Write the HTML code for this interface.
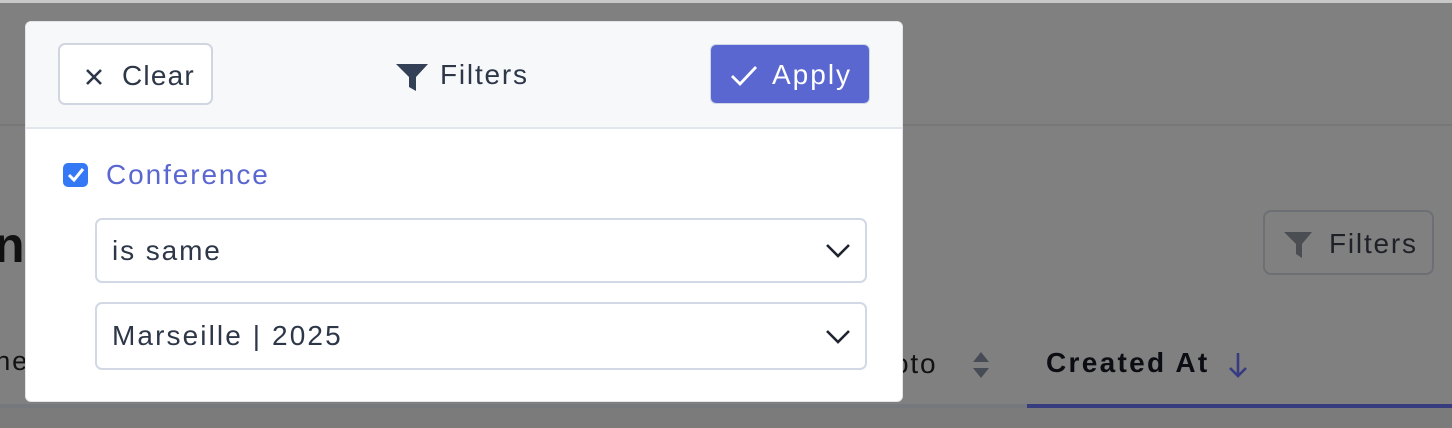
<!DOCTYPE html>
<html><head><style>
*{box-sizing:border-box;margin:0;padding:0}
body{width:1452px;height:428px;overflow:hidden;background:#808080;font-family:"Liberation Sans",sans-serif;position:relative;letter-spacing:1.8px}
.a{position:absolute}
</style></head><body>
<div class="a" style="left:0;top:0;width:1452px;height:3px;background:#c8c8c8"></div>
<div class="a" style="left:0;top:124px;width:1452px;height:2px;background:#777"></div>
<div class="a" style="left:-6px;top:216px;font-size:50px;font-weight:bold;color:#111">n</div>
<div class="a" style="left:-14px;top:346px;font-size:27px;color:#111">the</div>
<div class="a" style="left:1263px;top:210px;width:171px;height:65px;border:2px solid #6c6f73;border-radius:8px"></div>
<svg class="a" style="left:1283px;top:230px" width="32" height="30" viewBox="0 0 32 30"><path d="M1 2h28l-10 12v14l-6-4V14z" fill="#4a4d52"/></svg>
<div class="a" style="left:1329px;top:228px;font-size:28px;color:#1e2127">Filters</div>
<div class="a" style="left:893px;top:348px;font-size:28px;color:#111">oto</div>
<svg class="a" style="left:971px;top:351px" width="20" height="28"><path d="M10 1l8 10H2z M10 27l8-10H2z" fill="#474b55"/></svg>
<div class="a" style="left:1046px;top:347px;font-size:28px;font-weight:bold;color:#0b0d12;letter-spacing:2.3px">Created At</div>
<svg class="a" style="left:1226px;top:350px" width="24" height="30"><path d="M12 3v23M4 18l8 8 8-8" stroke="#363b82" stroke-width="2.6" fill="none"/></svg>
<div class="a" style="left:0;top:404px;width:1027px;height:4px;background:#75787c"></div>
<div class="a" style="left:1027px;top:404px;width:425px;height:4px;background:#373c7e"></div>
<div class="a" style="left:0;top:408px;width:1452px;height:20px;background:#7b7b7b"></div>

<div class="a" style="left:25px;top:21px;width:878px;height:381px;background:#fff;border-radius:6px;overflow:hidden;border:1px solid #e2e6ec">
 <div style="height:107px;background:#f7f8fa;border-bottom:2px solid #e2e6ee;position:relative">
  <div class="a" style="left:32px;top:21px;width:155px;height:62px;border:2px solid #cfd6e2;border-radius:7px;background:#fff"></div>
  <svg class="a" style="left:58px;top:45px" width="20" height="20"><path d="M3 3l14 14M17 3L3 17" stroke="#2d3748" stroke-width="2.6"/></svg>
  <div class="a" style="left:96px;top:38px;font-size:28px;color:#2d3748;letter-spacing:1.2px">Clear</div>
  <svg class="a" style="left:369px;top:41px" width="34" height="30" viewBox="0 0 34 30"><path d="M1 1h32L21 14v14l-7-4V14z" fill="#344055"/></svg>
  <div class="a" style="left:414px;top:37px;font-size:28px;color:#2d3748">Filters</div>
  <div class="a" style="left:684px;top:22px;width:160px;height:60px;background:#5a67d1;border-radius:6px;border:1px solid #cfd6e6"></div>
  <svg class="a" style="left:703px;top:42px" width="30" height="24"><path d="M3 12l8 8L27 3" stroke="#fff" stroke-width="2.8" fill="none"/></svg>
  <div class="a" style="left:746px;top:37px;font-size:28px;color:#fff;letter-spacing:2px">Apply</div>
 </div>
 <div class="a" style="left:37px;top:141px;width:25px;height:24px;background:#3478f6;border-radius:5px"></div>
 <svg class="a" style="left:40px;top:144px" width="20" height="18"><path d="M3 9l5 5 9-11" stroke="#fff" stroke-width="3" fill="none"/></svg>
 <div class="a" style="left:80px;top:137px;font-size:28px;color:#5a67d0;letter-spacing:1.9px">Conference</div>
 <div class="a" style="left:69px;top:196px;width:772px;height:65px;border:2px solid #d2d9e4;border-radius:7px"></div>
 <div class="a" style="left:86px;top:213px;font-size:28px;color:#2d3748;letter-spacing:1.9px">is same</div>
 <svg class="a" style="left:799px;top:220px" width="26" height="16"><path d="M2 3l11 11L24 3" stroke="#1f2530" stroke-width="2.6" fill="none"/></svg>
 <div class="a" style="left:69px;top:280px;width:772px;height:68px;border:2px solid #d2d9e4;border-radius:7px"></div>
 <div class="a" style="left:86px;top:298px;font-size:28px;color:#2d3748;letter-spacing:2.1px">Marseille | 2025</div>
 <svg class="a" style="left:799px;top:306px" width="26" height="16"><path d="M2 3l11 11L24 3" stroke="#1f2530" stroke-width="2.6" fill="none"/></svg>
</div>
</body></html>
